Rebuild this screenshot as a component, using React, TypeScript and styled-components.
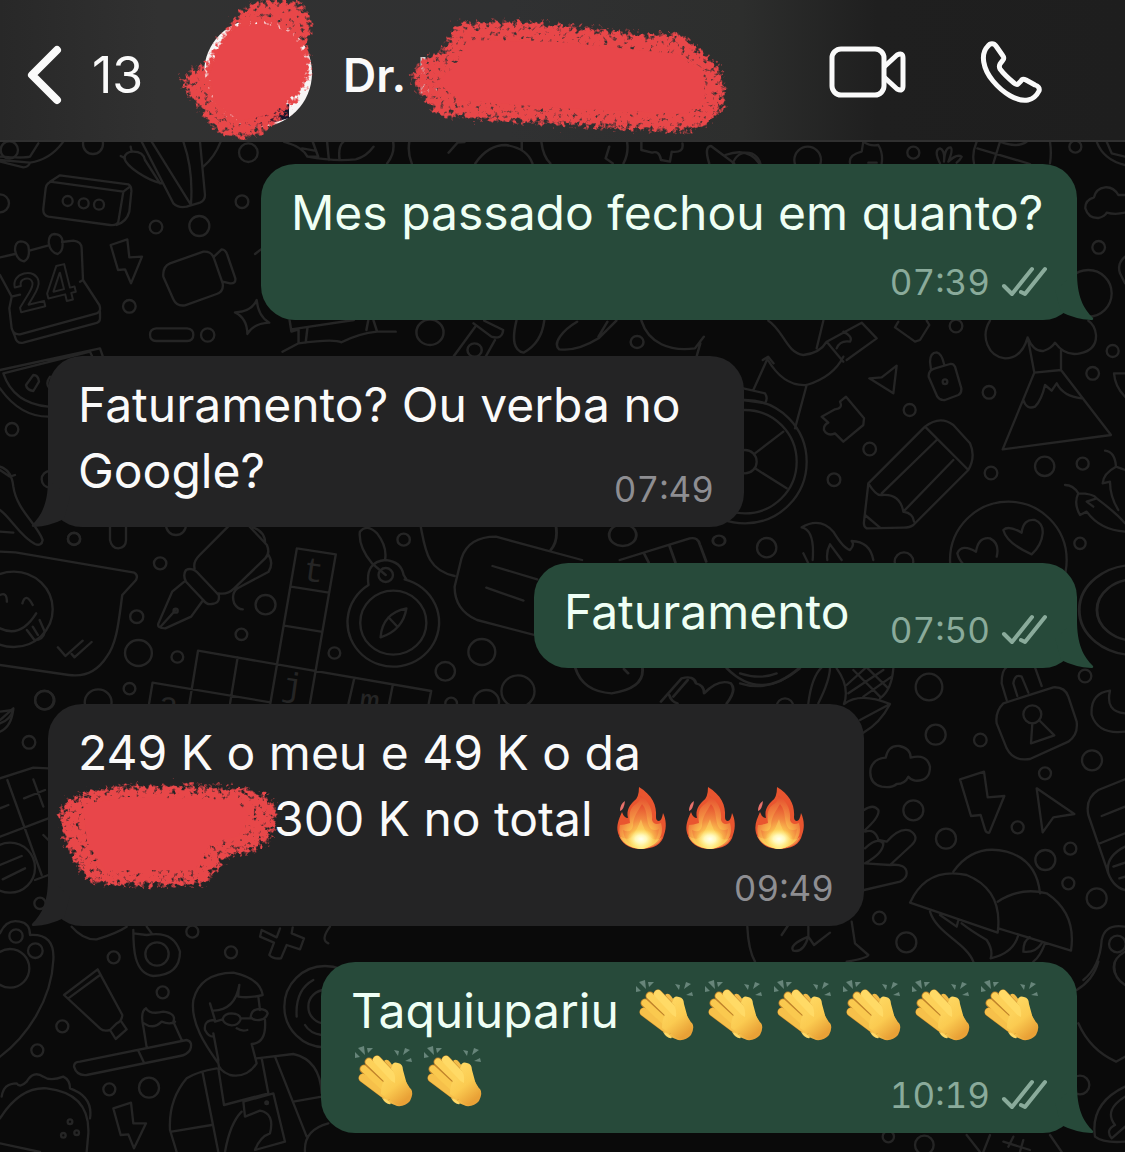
import React from "react";
import styled, { createGlobalStyle } from "styled-components";

const GlobalStyle = createGlobalStyle`
  *, *::before, *::after { box-sizing: border-box; }
  body { margin: 0; background: #0a0a0a; font-family: Inter, "Liberation Sans", sans-serif; }
  button { font: inherit; color: inherit; background: none; border: 0; padding: 0; cursor: pointer; }
`;

const Screen = styled.div`
  display: flex;
  flex-direction: column;
  min-height: 100vh;
`;

const Header = styled.header`
  display: flex;
  align-items: center;
  height: 142px;
  padding: 10px 84px 0 28px;
  overflow: hidden;
  color: #fafafa;
  background: linear-gradient(90deg, #282828 0%, #313131 14%, #303132 45%, #2d2e2d 66%, #1f1f1f 78%, #1e1e1e 100%);
  border-bottom: 2px solid #303030;
`;

const BackButton = styled.button`
  display: flex;
  align-items: center;
  gap: 30px;
  width: 155px;
  flex: none;

  && {
    font-size: 50px;
    line-height: 60px;
  }
`;

const Avatar = styled.div`
  flex: none;
  width: 130px;
  height: 138px;
  margin-right: 30px;
`;

const Contact = styled.h1`
  display: flex;
  align-items: center;
  flex: 1;
  gap: 6px;
  margin: 0;
  font-size: 46px;
  line-height: 60px;
  font-weight: 600;
`;

const Actions = styled.nav`
  display: flex;
  align-items: center;
  gap: 74px;
  flex: none;
  padding-bottom: 6px;
`;

const Icon = styled.svg`
  display: block;
  flex: none;
  overflow: visible;
`;

const Chat = styled.main`
  position: relative;
  flex: 1;
  overflow: hidden;
`;

const Backdrop = styled.svg`
  position: absolute;
  top: 0;
  left: 0;
  width: 100%;
  fill: none;
  stroke: #252525;
  stroke-width: 7;
  stroke-linecap: round;
  stroke-linejoin: round;
`;

const MessageList = styled.ol`
  position: relative;
  display: flex;
  flex-direction: column;
  gap: 36px;
  margin: 0;
  padding: 22px 48px 19px;
  list-style: none;
`;

const Bubble = styled.li<{ $mine: boolean; $measure: number; $stacked: boolean }>`
  position: relative;
  display: flex;
  flex-direction: ${(p) => (p.$stacked ? "column" : "row")};
  justify-content: space-between;
  align-self: ${(p) => (p.$mine ? "flex-end" : "flex-start")};
  width: ${(p) => p.$measure}px;
  max-width: 100%;
  padding: 16px 30px;
  border-radius: 34px;
  color: ${(p) => (p.$mine ? "#effff5" : "#fafafa")};
  background: ${(p) => (p.$mine ? "#274a3a" : "#242425")};
`;

const Body = styled.p<{ $stacked: boolean }>`
  flex: 1;
  min-width: 0;
  margin: 0;
  padding-bottom: ${(p) => (p.$stacked ? 0 : 7)}px;
  font-size: 48px;
  line-height: 66px;
`;

const Line = styled.span`
  display: block;
  white-space: nowrap;
`;

const Meta = styled.div<{ $mine: boolean; $stacked: boolean }>`
  display: flex;
  align-items: center;
  align-self: flex-end;
  gap: 11px;
  width: 0;
  justify-content: flex-end;
  padding-top: ${(p) => (p.$stacked ? 14 : 0)}px;
  font-size: 35px;
  line-height: 44px;
  font-variant-numeric: tabular-nums;
  color: ${(p) => (p.$mine ? "#8aab9b" : "#8e8e92")};
`;

const TailShape = styled.svg<{ $mine: boolean }>`
  position: absolute;
  bottom: 0;
  right: ${(p) => (p.$mine ? "-17px" : "auto")};
  left: ${(p) => (p.$mine ? "auto" : "-17px")};
  transform: ${(p) => (p.$mine ? "none" : "scaleX(-1)")};
`;

const EmojiGlyph = styled.svg`
  display: inline-block;
  vertical-align: top;
  overflow: visible;
`;

const Redaction = styled.svg`
  display: inline-block;
  vertical-align: top;
  overflow: visible;
`;

const HiddenDefs = styled.svg`
  position: absolute;
`;

type Layer = { at: string; dots: number[][]; paths: string };

const THIRD = 1 / 3;

const layers: Layer[] = [
  {
    at: `translate(0 140) scale(${THIRD})`,
    dots: [
      [203, 183, 15], [251, 190, 15], [297, 194, 15], [279, 12, 30], [745, 38, 28], [0, 190, 27],
      [726, 185, 19], [468, 261, 19], [598, 258, 30], [388, 499, 19], [623, 585, 20], [36, 868, 19],
      [528, 1155, 30], [222, 1196, 18], [150, 1018, 25], [28, 30, 26],
    ],
    paths: `M150 125L370 155L355 245Q350 258 330 255L145 230Q128 225 130 205L137 145Q140 125 160 125M150 125L180 106L385 133Q395 138 394 155L388 215Q380 245 350 255M370 155L390 140
M425 5L520 190Q535 205 560 200L600 188Q615 182 615 165L600 5M455 5L570 190M550 5Q580 90 573 190M485 130C440 120 380 80 373 55Q375 35 400 35Q430 35 435 60L480 130M662 5Q645 50 610 80M375 55L362 48M395 35L392 20
M115 10L90 50Q70 55 0 50M0 65L70 82Q85 82 90 68L0 60M190 5Q150 60 90 68
M0 352L45 342M88 332L146 316M186 306L220 302Q245 305 245 325L249 420L298 495Q305 515 290 520L60 583Q40 585 35 565L28 505L35 470L0 405M35 470L60 464M240 425L249 420M300 515V535Q300 548 285 550L70 608Q50 612 45 590L40 578
M85 318Q92 355 72 364Q50 360 45 330Q45 305 62 304Q80 305 85 318ZM186 296Q193 333 173 342Q151 338 146 308Q146 283 163 282Q181 283 186 296Z
M332 315L382 298L388 352L426 350L393 430L375 388L354 390Z
M510 370L610 335Q635 333 642 355L668 430Q672 455 650 462L555 496Q530 500 520 478L490 410Q487 380 510 370ZM642 350L665 328Q677 328 682 345L706 415Q708 432 690 430L668 425
M770 480Q775 530 808 548Q760 550 742 582Q742 535 705 517Q755 515 770 480ZM765 342L783 328
M469 565H561Q580 567 580 584Q580 602 561 603H469Q450 602 450 584Q450 567 469 565
M0 690L300 625L308 648M10 700L270 635L276 648M10 700Q40 790 145 800M0 745Q60 830 145 830M100 705Q115 705 117 725L100 753Q80 750 78 735ZM150 710Q135 730 148 745
M0 980Q35 990 40 1040C50 1110 110 1150 128 1200Q125 1220 105 1212C60 1190 30 1130 0 1110M0 990L30 1010L45 1005M0 1175L40 1178
M330 1160V1200Q335 1225 355 1225Q378 1222 378 1200V1160`,
  },
  {
    at: `translate(740 140) scale(${THIRD})`,
    dots: [
      [1045, 460, 70], [203, 60, 40], [15, 965, 185], [15, 965, 155], [15, 965, 35], [615, 725, 7],
      [805, 1260, 175], [520, 38, 18], [1006, 20, 18], [1076, 322, 19], [648, 558, 19], [1118, 633, 18],
      [1058, 700, 19], [747, 757, 19], [509, 810, 18], [389, 927, 19], [282, 1019, 19], [753, 999, 19],
      [914, 979, 29], [1028, 971, 18], [80, 1223, 29], [1020, 1210, 17], [492, 1265, 28], [20, 80, 42],
    ],
    paths: `M1155 165H1135Q1120 140 1095 142Q1068 145 1062 172Q1035 180 1036 205Q1045 235 1075 234Q1095 230 1100 218Q1125 225 1155 218M1155 350Q1130 370 1140 400L1155 430
M330 70Q325 45 365 35L370 5Q390 20 415 15Q430 40 425 70M385 68H410M600 70Q580 30 600 25Q615 30 612 65Q615 20 632 22Q640 30 625 65Q650 40 665 50Q660 60 650 68M710 5Q695 40 702 70M930 5Q935 40 930 70M712 25L870 72M760 70L780 5Q830 25 860 5M1070 5Q1090 60 1155 75M1100 5L1115 40L1155 50
M750 542C720 590 745 650 795 655Q845 655 863 592Q880 635 910 633Q935 625 945 608Q975 650 1020 640Q1070 630 1068 585Q1065 555 1045 542M863 592L883 698L788 928L1113 885L963 690V630M883 698L963 690M850 780Q860 810 885 800Q905 780 915 735L935 752L950 730Q970 770 1025 775M1155 700H1122Q1125 740 1155 770
M585 685L630 672Q640 670 645 680L664 745Q665 760 655 765L615 780Q600 782 592 770L566 710Q565 690 585 685ZM573 688L570 665Q570 638 590 637Q605 640 612 672
M388 715L425 712L470 677L460 760Z
M245 830L285 808Q310 805 300 785L318 770L372 835L370 855L310 905L285 880Q262 890 252 870Q250 855 265 848Z
M555 860Q600 825 640 855L690 910Q708 950 685 990L520 1155Q510 1163 490 1163L380 1165Q370 1160 372 1145L385 1030ZM555 860L685 990M385 1030Q410 1070 425 1065Q480 1060 490 1115Q520 1120 522 1145M425 1060L590 900M490 1115L640 960M375 1125L420 1163
M45 940L130 875M45 985L140 1045M10 745L75 760Q85 775 75 790L10 780M40 750L82 657Q130 740 200 735Q280 710 310 650M200 735L165 865M85 542C130 570 140 640 190 645Q240 640 260 605L365 548L410 595L320 660M260 605L310 665M290 625Q300 600 330 605Q340 590 310 575M250 542L230 625
M475 545L465 562L525 605L540 600L568 555L560 542
M975 1035Q1000 1035 1015 1060Q1000 1090 1020 1125L1040 1115Q1080 1170 1155 1175M1015 1060Q1060 1060 1070 1075Q1130 1120 1155 1150M1070 1075L1040 1085L1060 1100M1095 932Q1125 935 1128 980Q1090 1000 1088 1030L1110 1025Q1110 1070 1135 1110M1128 980L1155 990
M875 1243Q800 1210 790 1170Q805 1155 845 1178Q850 1135 885 1140Q910 1150 908 1180Q905 1215 875 1243ZM725 1310Q660 1280 652 1240Q665 1210 708 1235Q715 1190 750 1195Q780 1210 770 1250
M185 1162Q240 1130 280 1175Q310 1225 330 1230Q345 1215 335 1203Q390 1205 400 1260M185 1162Q225 1170 218 1260M262 1260Q258 1235 270 1213Q290 1240 305 1260M190 1240L210 1280`,
  },
  {
    at: `translate(0 520) scale(.3444 ${THIRD})`,
    dots: [
      [40, 268, 113], [1142, 308, 96], [1120, 165, 21], [215, 57, 18], [465, 130, 18], [397, 290, 19],
      [402, 399, 39], [515, 411, 17], [376, 506, 17], [130, 541, 28], [285, 547, 39], [771, 254, 29],
      [701, 343, 17], [971, 399, 17], [1172, 59, 18], [1399, 396, 39], [1293, 454, 28], [1504, 514, 48],
      [1412, 547, 37], [1310, 550, 17], [510, 272, 6],
    ],
    paths: `M0 95L45 97L390 158Q402 165 395 180L355 225C345 300 340 370 310 410Q270 475 200 465L0 435M0 225Q20 215 20 245M65 250Q75 215 95 255M0 325Q60 355 105 280M78 330L100 360Q125 360 130 335L115 300M95 320L110 345M168 382L190 408L240 362M208 402L216 412L266 366
M460 310L500 215L535 185M590 240L555 290L480 325Q455 325 460 310M468 318L510 270M540 150Q560 140 580 165L635 225Q640 250 615 252Q600 255 590 240L540 185Q530 165 540 150ZM565 145Q560 125 580 105L662 20M725 20L775 75Q785 100 770 115L680 205Q660 225 635 220M735 22Q770 35 770 70M780 105Q795 130 780 155L690 205Q670 220 680 250Q690 268 705 268
M862 85L975 103L900 550M862 85L785 550M845 200L955 218M825 317L932 335M575 392L1252 513L1245 550M575 392L550 550M690 412L668 550M443 488L785 547M443 488L433 550M1028 478L1012 550M1140 497L1130 550
M1070 195A133 133 0 1 0 1175 178M1070 195Q1060 125 1120 120Q1165 125 1172 165L1180 178M1105 352Q1110 280 1180 265Q1170 330 1105 352ZM1128 292L1152 318M1080 130Q1040 80 1045 35Q1065 10 1095 40Q1125 80 1118 120M1080 130L1120 165
M1690 120L1440 50Q1360 50 1340 115L1320 200Q1320 270 1385 300L1570 350M1430 138L1560 178M1412 203L1520 242M1222 22C1235 90 1240 150 1320 168M0 575L38 570Q30 600 0 610`,
  },
  {
    at: `translate(740 660) scale(${THIRD})`,
    dots: [
      [877, 163, 27], [1132, 852, 25], [567, 81, 40], [587, 224, 30], [721, 240, 19], [1035, 48, 19],
      [1056, 301, 30], [915, 340, 18], [520, 451, 30], [833, 502, 18], [618, 536, 30], [916, 600, 30],
      [991, 566, 18], [985, 670, 18], [1070, 715, 30], [418, 774, 19], [499, 847, 30], [135, 140, 25],
    ],
    paths: `M790 130L940 82Q975 80 985 110L1010 185Q1015 225 985 245L870 297Q820 305 800 265L770 190Q765 155 790 130ZM800 120L785 70Q785 30 800 22M905 78L885 22M832 108L820 70Q825 40 845 50L865 98M877 190L873 250L943 226L897 180
M1110 92Q1050 100 1055 165Q1075 225 1155 215M1110 92Q1095 155 1155 160
M437 293Q445 255 478 258Q512 265 512 293Q560 280 570 320Q570 365 525 362Q510 358 505 350Q495 372 470 372Q455 385 425 380Q385 370 392 325Q402 295 437 293Z
M660 358L732 335L743 412L793 408L748 518Q738 520 735 508L722 465L693 468ZM890 385L1003 462L940 472L908 517Z
M205 130Q215 50 245 22M235 130Q270 60 270 22M290 25Q330 80 312 132M312 132Q360 95 450 132Q420 190 370 218M450 132L360 180M460 25Q455 90 420 115M320 75L375 25M325 100L430 30M370 110L455 50M340 30L420 110M380 22L445 85M0 70Q90 100 180 25M0 40Q60 60 110 40
M372 450Q400 430 415 450Q420 470 375 510M375 515Q405 505 415 540L440 545Q480 500 510 512Q540 530 515 555L450 615Q500 610 500 640Q500 655 480 665L372 690M375 565Q410 530 430 550Q430 580 375 610L450 615
M640 635Q700 550 800 575Q890 600 900 700M510 728Q560 620 680 645Q790 690 773 818ZM773 725Q840 680 920 700Q1010 760 993 872L775 805M570 755C590 820 680 850 700 905M600 765L650 800L655 780M665 790Q690 810 740 840Q760 870 752 895Q820 880 835 825M850 875Q850 840 870 832M850 875Q885 880 905 850M915 850Q900 890 880 905
M22 800Q25 870 45 905M335 785L345 850L385 885Q380 895 320 905M125 825L145 795M205 800V830Q190 880 160 872Q145 855 205 830L222 855L270 818
M1155 358L1075 390Q1035 415 1045 465L1100 625Q1115 680 1155 690M1085 468L1155 440M1075 552L1155 520M1155 560Q1095 590 1105 640M1120 620L1155 608M1138 655L1155 650M1030 960Q1080 920 1085 840Q1095 790 1155 800M1155 875Q1110 900 1125 940`,
  },
  {
    at: `translate(0 700) scale(${THIRD})`,
    dots: [
      [30, 503, 75], [48, 708, 20], [106, 752, 22], [30, 805, 58], [471, 762, 35], [800, 1208, 4],
      [210, 1265, 7], [190, 1306, 7], [230, 1298, 7], [975, 920, 122], [975, 920, 50], [87, 127, 19],
      [133, 0, 28], [120, 610, 17], [577, 695, 18], [341, 772, 18], [693, 757, 18], [488, 877, 18],
      [187, 979, 18], [112, 1051, 18], [328, 1168, 18], [447, 1163, 30],
    ],
    paths: `M0 235L100 203L145 205M22 240L125 525M0 410L145 355M105 540L145 525M72 295L135 270M100 238L130 320M0 325L25 315M0 495L65 468M8 538L75 505M40 25Q35 80 0 95M0 60L40 25M130 405L145 420
M0 700Q20 655 60 665Q90 670 90 705Q165 700 160 780C155 900 80 1010 0 1070
M215 680Q250 720 290 718Q350 700 380 680M400 690C400 740 400 820 460 828Q540 825 540 755Q520 690 440 705L400 700M440 680L455 700
M785 690L780 710L822 728L808 765Q820 778 843 775L860 735L900 748L912 715L875 700L878 682M785 690L830 712L840 685M990 680Q960 720 985 730
M192 885L293 808L367 945Q365 965 350 970L330 990Q310 995 300 985ZM205 895L300 825M330 990L347 1017L380 988L362 962
M222 1100Q222 1085 240 1085L560 1020Q580 1025 570 1050Q560 1065 540 1068L260 1125Q230 1128 222 1100ZM415 1052L432 1088M440 1042L430 980Q420 935 438 925Q450 945 490 935Q530 940 520 965L545 1020M432 970Q460 990 485 965Q510 975 525 965
M655 1090C620 1040 570 970 580 900Q600 820 700 818Q780 835 788 885Q750 895 715 890Q715 870 718 855Q705 930 640 932M630 910L645 960M775 890L780 930M795 960Q800 1030 755 1032L770 1090Q740 1135 690 1125Q650 1110 655 1080L640 1000M645 960Q610 960 615 990Q625 1010 640 1010M668 958Q672 940 695 940Q722 942 722 958Q715 976 695 976Q672 974 668 958ZM752 950Q755 928 778 927Q800 928 803 940Q798 958 778 960Q758 962 752 950ZM645 965L668 958M722 955H752M710 985Q725 995 742 990
M510 1290Q505 1200 560 1135Q590 1115 650 1105M770 1075L880 1062Q960 1080 965 1180M510 1290L530 1356M515 1295L635 1275M608 1118L655 1356M655 1105L672 1215L805 1180L785 1075M825 1070L920 1310M880 1205L965 1190M730 1205L820 1180L855 1325L765 1350Q780 1310 810 1300Q825 1240 780 1232L735 1250ZM675 1356Q690 1270 725 1235M915 1356Q910 1290 985 1270
M340 1225L393 1208L400 1270L438 1270L402 1345L385 1303L362 1305Z
M0 1255Q60 1160 140 1165Q270 1180 265 1300L260 1356M0 1330L120 1356M5 1190Q10 1150 50 1150Q60 1165 80 1145Q100 1110 130 1130Q150 1145 190 1130Q210 1140 210 1165Q280 1190 270 1255
M890 950Q885 870 940 840M915 975Q930 1000 965 1005`,
  },
  {
    at: `translate(870 960) scale(${THIRD})`,
    dots: [[630, 375, 28], [163, 555, 28], [55, 530, 17]],
    paths: `M685 5Q670 60 620 90M735 5Q725 50 765 75M625 190Q660 270 738 305L765 290M765 380Q660 430 675 530Q700 550 765 545M765 410Q700 450 735 495Q705 510 725 535L765 500M290 525L330 576M360 525L340 576M400 545L480 570M430 530L415 560M460 540L450 575M540 525L575 576`,
  },
  {
    at: `translate(220 130) scale(.3571 ${THIRD})`,
    dots: [[588, 607, 38], [713, 660, 20], [1168, 636, 18]],
    paths: `M195 572L200 605L220 598M200 598L375 570M245 592L240 638M220 598V640L175 665M220 640Q320 625 340 637Q390 610 440 605H492M415 572L410 600M430 572L440 605M710 580L760 620Q790 630 793 600L740 572M715 590L655 678M770 630L745 678M830 572Q810 660 850 668Q900 640 908 572M1000 575C960 600 930 640 950 658Q1000 665 1060 625L1110 572M1085 575L1060 620M1180 572C1200 640 1260 665 1330 655L1355 620M1345 640L1335 678M1520 690L1535 680L1550 700
M180 36Q230 50 245 80Q320 95 380 88Q410 80 430 50M230 55L265 62M245 80H275L260 36M300 36L305 90M335 90Q330 50 345 36M485 36Q490 70 468 100M530 36Q525 70 537 100M640 68L665 38L685 36M715 100Q750 45 800 45Q860 55 875 100M845 36V60M900 36Q905 80 925 100M1140 36Q1145 70 1130 100M1090 50L1080 85L1100 100M1180 36V60L1210 68Q1230 60 1235 90L1260 95L1265 65Q1300 70 1295 40M1370 100Q1355 50 1375 48L1440 100M1415 75Q1480 50 1510 100`,
  },
  {
    at: `translate(480 515) scale(.4113 ${THIRD})`,
    dots: [[347, 60, 33], [581, 77, 15], [1592, 285, 135], [1592, 285, 92]],
    paths: `M340 135L510 70Q530 65 535 90L550 140M400 118L410 142M460 90L475 142M185 36Q190 80 172 105M232 460Q250 530 320 535Q400 520 395 460M350 462L360 475M440 560L490 490Q520 480 525 505Q545 510 545 535Q580 490 610 505Q625 525 600 565M460 540Q465 560 480 565M505 495L470 545M600 460Q680 560 775 460`,
  },
];

function Wallpaper() {
  return (
    <Backdrop viewBox="0 142 1125 1010" aria-hidden="true">
      {layers.map((layer) => (
        <g key={layer.at} transform={layer.at}>
          <path d={layer.paths} />
          {layer.dots.map(([x, y, r]) => (
            <circle key={`${x}-${y}-${r}`} cx={x} cy={y} r={r} />
          ))}
        </g>
      ))}
      <g fontFamily="Inter, sans-serif" strokeWidth="2">
        <text x="18" y="313" fontSize="50" fontWeight="600" transform="rotate(-14 18 313)">24</text>
        <g fontSize="34" fontFamily="Liberation Mono, monospace" fill="#252525" strokeWidth="0">
          <text x="302" y="580" transform="rotate(8 302 580)">t</text>
          <text x="281" y="695" transform="rotate(8 281 695)">j</text>
          <text x="358" y="711" transform="rotate(8 358 711)">m</text>
          <text x="157" y="714" transform="rotate(8 157 714)">a</text>
        </g>
      </g>
    </Backdrop>
  );
}

function PaintDefs() {
  return (
    <HiddenDefs width="0" height="0" aria-hidden="true">
      <defs>
        <filter id="crayon" x="-10%" y="-15%" width="120%" height="130%">
          <feGaussianBlur in="SourceAlpha" stdDeviation="5" result="soft" />
          <feTurbulence type="fractalNoise" baseFrequency="0.22" numOctaves="3" seed="7" result="noise" />
          <feComposite in="soft" in2="noise" operator="arithmetic" k1="0" k2="1.1" k3="1.4" k4="-1.32" result="rough" />
          <feComponentTransfer in="rough" result="edge">
            <feFuncA type="linear" slope="3" />
          </feComponentTransfer>
          <feFlood floodColor="#e8464a" />
          <feComposite in2="edge" operator="in" />
        </filter>
        <radialGradient id="flame" cx="0.5" cy="0.88" r="0.85">
          <stop offset="0" stopColor="#fffdd8" />
          <stop offset="0.15" stopColor="#fff08a" />
          <stop offset="0.38" stopColor="#fbc04f" />
          <stop offset="0.62" stopColor="#f28a41" />
          <stop offset="1" stopColor="#e5502f" />
        </radialGradient>
        <radialGradient id="glow">
          <stop offset="0" stopColor="#fffff0" />
          <stop offset="0.4" stopColor="#fffbc4" stopOpacity="0.9" />
          <stop offset="1" stopColor="#ffe970" stopOpacity="0" />
        </radialGradient>
        <linearGradient id="skin" x1="0" y1="0" x2="0.6" y2="1">
          <stop offset="0" stopColor="#ffdc68" />
          <stop offset="0.6" stopColor="#fbcb51" />
          <stop offset="1" stopColor="#e9a136" />
        </linearGradient>
      </defs>
    </HiddenDefs>
  );
}

function Fire() {
  return (
    <EmojiGlyph width="69" height="66" viewBox="0 0 69 66" role="img" aria-label="fogo">
      <path d="M33 1C46 9 51 19 50 31Q50 35 53 35Q56 34 57 27C60 33 61 41 58 49C56 58 48 63 35 63C22 63 15 57 12 47C10 39 13 33 16 26Q18 32 22 32C20 24 24 19 28 15Q33 12 33 1Z" fill="#e9552f" />
      <path d="M34 9C43 15 47 24 46 34Q48 40 55 37C58 47 55 59 36 63C18 62 11 51 14 39Q18 39 24 37C22 25 26 20 30 18Q35 15 34 9Z" fill="url(#flame)" />
      <path d="M36 18C43 26 39 36 45 43Q49 45 53 43C52 55 45 62 35 63C25 62 18 55 17 44Q25 48 27 40C27 31 32 25 36 18Z" fill="url(#flame)" />
      <path d="M13 50Q23 56 27 49Q32 42 35 33Q38 45 44 51Q50 56 56 51Q53 61 35 63Q18 61 13 50Z" fill="#ffe168" opacity=".4" />
      <ellipse cx="35" cy="53" rx="14" ry="10" fill="url(#glow)" />
      <path d="M19 15Q14 18 14 25Q18 24 19 15Z" fill="#e8716b" />
    </EmojiGlyph>
  );
}

function Clap() {
  return (
    <EmojiGlyph width="69" height="66" viewBox="0 0 69 66" role="img" aria-label="palmas">
      <g fill="#67857a">
        <path d="M4 8L9 13L4 14ZM7 4L13 2L14 11ZM16 4L22 4L17 9ZM43 6L48 7L47 12ZM52 11L54 4L59 6ZM54 17L60 14L61 18Z" />
      </g>
      <path d="M40 23Q42 17 47 19Q52 20 52 26L55 37Q56 43 60 45Q63 49 59 57Q54 63 46 62L34 57Q38 40 40 23Z" fill="url(#skin)" />
      <path d="M39 26L33 17Q36 14 39 18L47 29Z" fill="#f3bc49" />
      <g fill="none" strokeLinecap="round" strokeLinejoin="round">
        <path d="M26 16L48 39M18 18L45 44M13 25L40 50M12 34L36 52" stroke="#c0832a" strokeWidth="9" />
        <path d="M12 34L36 52" stroke="#f6c04a" strokeWidth="8" />
        <path d="M13 25L40 50" stroke="#fac94f" strokeWidth="7" />
        <path d="M18 18L45 44" stroke="#fdd159" strokeWidth="7" />
        <path d="M26 16L48 39" stroke="#ffda66" strokeWidth="8" />
      </g>
      <path d="M35 34L44 39Q45 29 40 25Q42 18 47 21L54 36L60 46Q61 53 55 59Q50 62 45 60L30 50Q30 39 35 34Z" fill="url(#skin)" />
      <path d="M31 54Q37 55 40 60Q35 61 31 54Z" fill="#ffd968" />
    </EmojiGlyph>
  );
}

function Ticks() {
  return (
    <Icon width="46" height="32" viewBox="0 0 46 32" fill="none" stroke="currentColor" strokeWidth="4" strokeLinecap="round" strokeLinejoin="round" role="img" aria-label="Lida">
      <path d="M3 20L11 28L31 3M20 26L24 28L44 3" />
    </Icon>
  );
}

function Tail({ mine }: { mine: boolean }) {
  return (
    <TailShape $mine={mine} width="49" height="50" viewBox="0 0 49 50" fill={mine ? "#274a3a" : "#242425"} aria-hidden="true">
      <path d="M32 2C32 26 38 38 48 48Q49 50 46 50Q30 49 16 42L10 20Z" />
    </TailShape>
  );
}

type MessageProps = {
  mine?: boolean;
  stacked?: boolean;
  measure: number;
  time: string;
  lines: React.ReactNode[];
};

function Message({ mine = false, stacked = false, measure, time, lines }: MessageProps) {
  return (
    <Bubble $mine={mine} $measure={measure} $stacked={stacked}>
      <Tail mine={mine} />
      <Body $stacked={stacked}>
        {lines.map((line, i) => (
          <Line key={i}>{line}</Line>
        ))}
      </Body>
      <Meta $mine={mine} $stacked={stacked}>
        <time>{time}</time>
        {mine && <Ticks />}
      </Meta>
    </Bubble>
  );
}

const claps = (count: number) => Array.from({ length: count }, (_, i) => <Clap key={i} />);

export default function App() {
  return (
    <Screen>
      <GlobalStyle />
      <PaintDefs />
      <Header>
        <BackButton aria-label="Voltar, 13 conversas">
          <Icon width="34" height="58" viewBox="0 0 34 58" fill="none" stroke="currentColor" strokeWidth="8" strokeLinecap="round" strokeLinejoin="round">
            <path d="M29 4L4 29L29 54" />
          </Icon>
          <span>13</span>
        </BackButton>
        <Avatar>
          <Icon width="130" height="138" viewBox="183 6 130 138" role="img" aria-label="Foto do contato">
            <circle cx="258" cy="73" r="54" fill="#f7f5f5" />
            <path d="M240 124L258 127L289 118V104L262 110Z" fill="#17152b" />
            <path d="M240 8L262 -2L290 -2L307 6L315 30L306 40L314 62L308 88L292 108L278 123L264 134L242 141L216 133L201 118L199 106L188 100L179 77L197 66L206 64L210 50L224 30Z" fill="#e8464a" filter="url(#crayon)" />
            <path d="M236 28L262 23L292 33L307 62L300 88L274 113L240 121L217 104L209 75L222 44Z" fill="#e8464a" />
          </Icon>
        </Avatar>
        <Contact>
          <span>Dr.</span>
          <Redaction width="313" height="108" viewBox="413 21 313 108" role="img" aria-label="Nome oculto">
            <path d="M424 57V91H438" fill="none" stroke="#fafafa" strokeWidth="5" opacity=".8" />
            <path d="M456 21L520 20L570 24L640 32L687 33L703 50L721 63L728 90L725 112L707 128L680 134L640 132L560 126L480 121L438 117L425 102L410 80L418 60L443 49L452 32Z" fill="#e8464a" filter="url(#crayon)" />
            <path d="M468 40L560 42L678 54L704 74L706 98L688 114L560 108L460 100L438 82L458 64Z" fill="#e8464a" />
          </Redaction>
        </Contact>
        <Actions>
          <button aria-label="Chamada de vídeo">
            <Icon width="78" height="54" viewBox="0 0 78 54" fill="none" stroke="currentColor" strokeWidth="5" strokeLinejoin="round">
              <rect x="3" y="4" width="52" height="46" rx="9" />
              <path d="M55 22L68 10Q74 7 74 13V41Q74 47 68 44L55 32" />
            </Icon>
          </button>
          <button aria-label="Chamada de voz">
            <Icon width="60" height="60" viewBox="0 0 60 60" fill="none" stroke="currentColor" strokeWidth="5" strokeLinejoin="round">
              <path d="M15 4C13 1 9 1 7 4C-1 12 2 27 12 39C22 51 36 60 47 58C52 57 56 53 58 49C59 46 57 44 54 43L45 38C43 37 41 37 40 39L37 42C36 43 34 42 33 41C27 36 22 31 19 27C18 25 18 24 19 22L22 18C23 17 23 15 22 14Z" />
            </Icon>
          </button>
        </Actions>
      </Header>
      <Chat>
        <Wallpaper />
        <MessageList>
          <Message mine stacked measure={816} time="07:39" lines={["Mes passado fechou em quanto?"]} />
          <Message measure={696} time="07:49" lines={["Faturamento? Ou verba no", "Google?"]} />
          <Message mine measure={543} time="07:50" lines={["Faturamento"]} />
          <Message
            stacked
            measure={816}
            time="09:49"
            lines={[
              "249 K o meu e 49 K o da",
              <>
                <Redaction width="196" height="66" viewBox="79 786 196 66" role="img" aria-label="Nome oculto">
                  <path d="M62 801L92 789L120 784L190 784L245 787L270 794L280 808L275 837L257 853L229 857L218 873L207 886L150 888L92 885L77 867L64 842L58 814Z" fill="#e8464a" filter="url(#crayon)" />
                  <path d="M84 804L130 797L236 800L250 814L240 836L212 843L196 870L106 870L88 842Z" fill="#e8464a" />
                </Redaction>
                300 K no total <Fire /><Fire /><Fire />
              </>,
            ]}
          />
          <Message mine measure={756} time="10:19" lines={[<>Taquiupariu {claps(6)}</>, claps(2)]} />
        </MessageList>
      </Chat>
    </Screen>
  );
}
